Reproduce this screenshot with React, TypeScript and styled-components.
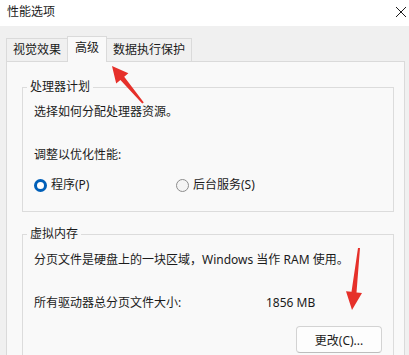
import styled, { createGlobalStyle } from "styled-components";

const Global = createGlobalStyle`
  html, body {
    margin: 0;
    padding: 0;
    background: #f0f0f0;
  }
  body {
    font-family: "Noto Sans", "Noto Sans CJK SC", sans-serif;
    font-size: 12px;
    color: #1b1b1b;
  }
`;

const Window = styled.div`
  position: relative;
  width: 409px;
  height: 355px;
  overflow: hidden;
  background: #f0f0f0;
`;

const TitleBar = styled.div`
  height: 26px;
  background: #fff;
  display: flex;
  align-items: center;
  justify-content: space-between;
  padding: 0 2px 2px 7px;
  box-sizing: border-box;
`;

const Title = styled.span`
  line-height: 16px;
`;

const TabStrip = styled.div`
  height: 35px;
  display: flex;
  align-items: flex-end;
  padding-left: 6px;
`;

const Tab = styled.div<{ $active?: boolean }>`
  box-sizing: border-box;
  height: ${(p) => (p.$active ? "26px" : "23px")};
  margin-bottom: ${(p) => (p.$active ? "-1px" : "0")};
  padding: ${(p) => (p.$active ? "3px 7px 0 7px" : "3px 6px 0 6px")};
  margin-left: -1px;
  border: 1px solid #dadada;
  border-bottom: none;
  background: ${(p) => (p.$active ? "#f9f9f9" : "#f0f0f0")};
  position: relative;
  z-index: ${(p) => (p.$active ? 1 : 0)};
  line-height: 16px;
  &:first-child {
    margin-left: 0;
  }
`;

const Panel = styled.div`
  margin: 0 4px 0 6px;
  height: 320px;
  border: 1px solid #dadada;
  background: #f9f9f9;
  padding: 17px 10px 0 15px;
  box-sizing: border-box;
`;

const Group = styled.fieldset<{ $gap?: number }>`
  margin: ${(p) => p.$gap ?? 0}px 0 0 0;
  padding: 0 11px 18px 11px;
  border: 1px solid #dcdcdc;
  min-width: 0;
`;

const Legend = styled.legend`
  margin-left: -7px;
  padding: 0 3px;
  line-height: 16px;
`;

const Line = styled.div<{ $top: number }>`
  margin-top: ${(p) => p.$top}px;
  line-height: 16px;
  white-space: nowrap;
`;

const RadioRow = styled.div`
  margin-top: 14px;
  display: grid;
  grid-template-columns: 142px auto;
  line-height: 16px;
`;

const RadioItem = styled.label`
  display: flex;
  align-items: center;
  gap: 4px;
`;

const RadioDot = styled.span<{ $checked?: boolean }>`
  box-sizing: border-box;
  width: 13px;
  height: 13px;
  border-radius: 50%;
  background: #fff;
  border: ${(p) => (p.$checked ? "3.5px solid #005fb8" : "1px solid #8d8d8d")};
  ${(p) => (p.$checked ? "" : "background: #f4f4f4;")}
`;

const SizeRow = styled.div`
  margin-top: 27px;
  display: grid;
  grid-template-columns: 232px auto;
  line-height: 16px;
`;

const ButtonRow = styled.div`
  margin-top: 15px;
  display: flex;
  justify-content: flex-end;
`;

const Button = styled.button`
  width: 86px;
  height: 27px;
  border: 1px solid #d3d3d3;
  border-bottom-color: #bdbdbd;
  border-radius: 4px;
  background: #fdfdfd;
  font: inherit;
  color: #1b1b1b;
  padding: 0;
`;

const Overlay = styled.svg`
  position: absolute;
  left: 0;
  top: 0;
  pointer-events: none;
`;

export default function App() {
  return (
    <>
      <Global />
      <Window>
        <TitleBar>
          <Title>性能选项</Title>
          <svg width="12" height="12" viewBox="0 0 12 12">
            <path d="M1 1 L11 11 M11 1 L1 11" stroke="#1b1b1b" strokeWidth="1" fill="none" />
          </svg>
        </TitleBar>
        <TabStrip>
          <Tab>视觉效果</Tab>
          <Tab $active>高级</Tab>
          <Tab>数据执行保护</Tab>
        </TabStrip>
        <Panel>
          <Group>
            <Legend>处理器计划</Legend>
            <Line $top={9}>选择如何分配处理器资源。</Line>
            <Line $top={27}>调整以优化性能:</Line>
            <RadioRow>
              <RadioItem>
                <RadioDot $checked />
                程序(P)
              </RadioItem>
              <RadioItem>
                <RadioDot />
                后台服务(S)
              </RadioItem>
            </RadioRow>
          </Group>
          <Group $gap={14}>
            <Legend>虚拟内存</Legend>
            <Line $top={10}>分页文件是硬盘上的一块区域，Windows 当作 RAM 使用。</Line>
            <SizeRow>
              <span>所有驱动器总分页文件大小:</span>
              <span>1856 MB</span>
            </SizeRow>
            <ButtonRow>
              <Button>更改(C)...</Button>
            </ButtonRow>
          </Group>
        </Panel>
        <Overlay width="409" height="355" viewBox="0 0 409 355">
          <polygon
            fill="#e6302a"
            points="112,66 128.4,73.2 124.2,76.7 143.8,102.4 142.2,103.6 120.4,79.9 116.2,83.4"
          />
          <polygon
            fill="#e6302a"
            points="352,310 346,291.2 351.5,291.8 358,247.9 360,248.1 356.5,292.4 362,293"
          />
        </Overlay>
      </Window>
    </>
  );
}
